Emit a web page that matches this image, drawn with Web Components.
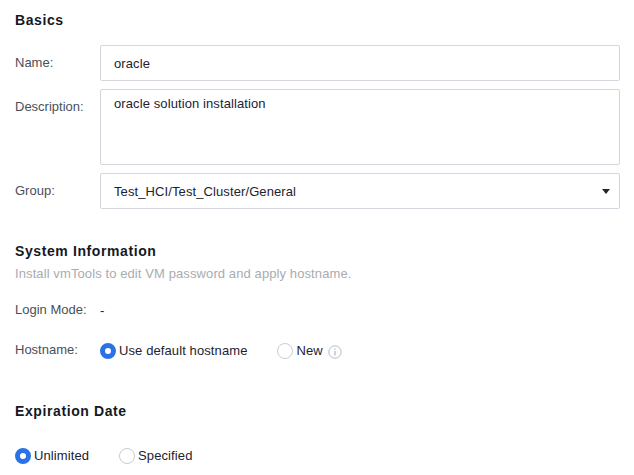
<!DOCTYPE html>
<html>
<head>
<meta charset="utf-8">
<style>
  html, body { margin: 0; padding: 0; background: #fff; }
  body { font: 13px "Liberation Sans", Arial, sans-serif; color: #1c2330; overflow: hidden; }
</style>
</head>
<body>
<vm-form>
  <form-section heading="Basics" style="--head-h:45px">
    <form-row label="Name:" style="--mb:8px"><text-box>oracle</text-box></form-row>
    <form-row label="Description:" style="--mb:8px"><text-box multi>oracle solution installation</text-box></form-row>
    <form-row label="Group:"><text-box select>Test_HCI/Test_Cluster/General</text-box></form-row>
  </form-section>

  <form-section heading="System Information" hint="Install vmTools to edit VM password and apply hostname." style="--top:34px;--head-h:70px">
    <form-row label="Login Mode:" plain style="--mb:21px"><span style="line-height:18px">-</span></form-row>
    <form-row label="Hostname:" plain>
      <radio-option checked style="margin-right:30px">Use default hostname</radio-option>
      <radio-option>New</radio-option>
      <info-icon></info-icon>
    </form-row>
  </form-section>

  <form-section heading="Expiration Date" style="--top:43px;--head-h:55px">
    <form-row plain nolabel>
      <radio-option checked style="margin-right:30px">Unlimited</radio-option>
      <radio-option>Specified</radio-option>
    </form-row>
  </form-section>
</vm-form>

<script>
// page wrapper
class VmForm extends HTMLElement {
  connectedCallback() {
    const shadow = this.attachShadow({ mode: 'open' });
    shadow.innerHTML = `
      <style>
        :host { display: block; padding: 12px 14px 0 15px; }
      </style>
      <slot></slot>`;
  }
}

class FormSection extends HTMLElement {
  connectedCallback() {
    const shadow = this.attachShadow({ mode: 'open' });
    const hint = this.getAttribute('hint');
    shadow.innerHTML = `
      <style>
        :host { display: block; margin-top: var(--top, 0); }
        .head { height: calc(var(--head-h, 33px) - 12px); }
        h3 { margin: 0; font-size: 14px; line-height: 16px; font-weight: 700; color: #15191f; letter-spacing: .6px; }
        p { margin: 7px 0 0; font-size: 13px; line-height: 16px; font-weight: 400; color: #a9abb0; letter-spacing: .1px; }
      </style>
      <div class="head">
        <h3>${this.getAttribute('heading')}</h3>
        ${hint ? `<p>${hint}</p>` : ''}
      </div>
      <slot></slot>`;
  }
}

class FormRow extends HTMLElement {
  connectedCallback() {
    const shadow = this.attachShadow({ mode: 'open' });
    const label = this.getAttribute('label');
    shadow.innerHTML = `
      <style>
        :host { display: flex; margin-bottom: var(--mb, 0); }
        .label { flex: 0 0 85px; font-size: 13px; line-height: 18px; color: #4a4f58; padding-top: 9px; }
        :host([plain]) .label { padding-top: 0; }
        :host([nolabel]) .label { display: none; }
        .body { flex: 1; display: flex; align-items: center; }
        :host([plain]) .body { margin-top: 1px; }
      </style>
      <div class="label">${label || ''}</div>
      <div class="body"><slot></slot></div>`;
  }
}

class TextBox extends HTMLElement {
  connectedCallback() {
    const shadow = this.attachShadow({ mode: 'open' });
    shadow.innerHTML = `
      <style>
        :host { display: block; flex: 1; box-sizing: border-box; height: 36px; border: 1px solid #d3d6dd; border-radius: 2px; padding: 0 13px; line-height: 35px; font-size: 13px; color: #1c2330; position: relative; letter-spacing: .1px; }
        :host([multi]) { height: 76px; line-height: 16px; padding-top: 6px; }
        svg { position: absolute; right: 9px; top: 15px; }
      </style>
      <slot></slot>
      ${this.hasAttribute('select') ? '<svg width="8" height="5" viewBox="0 0 8 5"><path d="M0 0h8L4 5z" fill="#22262e"/></svg>' : ''}`;
  }
}

class RadioOption extends HTMLElement {
  connectedCallback() {
    const shadow = this.attachShadow({ mode: 'open' });
    shadow.innerHTML = `
      <style>
        :host { display: inline-flex; align-items: center; font-size: 13px; line-height: 18px; color: #1c2330; letter-spacing: .1px; }
        i { box-sizing: border-box; width: 16px; height: 16px; border-radius: 50%; border: 1px solid #c9ccd4; margin-right: 3px; background: #fff; }
        :host([checked]) i { border: 5px solid #2b73e4; }
      </style>
      <i></i><slot></slot>`;
  }
}

class InfoIcon extends HTMLElement {
  connectedCallback() {
    const shadow = this.attachShadow({ mode: 'open' });
    shadow.innerHTML = `
      <style>
        :host { display: inline-flex; margin-left: 5px; margin-top: 1px; }
      </style>
      <svg width="14" height="14" viewBox="0 0 14 14" fill="none">
        <circle cx="7" cy="7" r="6.2" stroke="#b4bcc8"/>
        <path d="M7 6v4.5" stroke="#b4bcc8" stroke-width="1.3"/>
        <path d="M7 3.4v1.4" stroke="#b4bcc8" stroke-width="1.3"/>
      </svg>`;
  }
}

customElements.define('vm-form', VmForm);
customElements.define('form-section', FormSection);
customElements.define('form-row', FormRow);
customElements.define('text-box', TextBox);
customElements.define('radio-option', RadioOption);
customElements.define('info-icon', InfoIcon);
</script>
</body>
</html>
